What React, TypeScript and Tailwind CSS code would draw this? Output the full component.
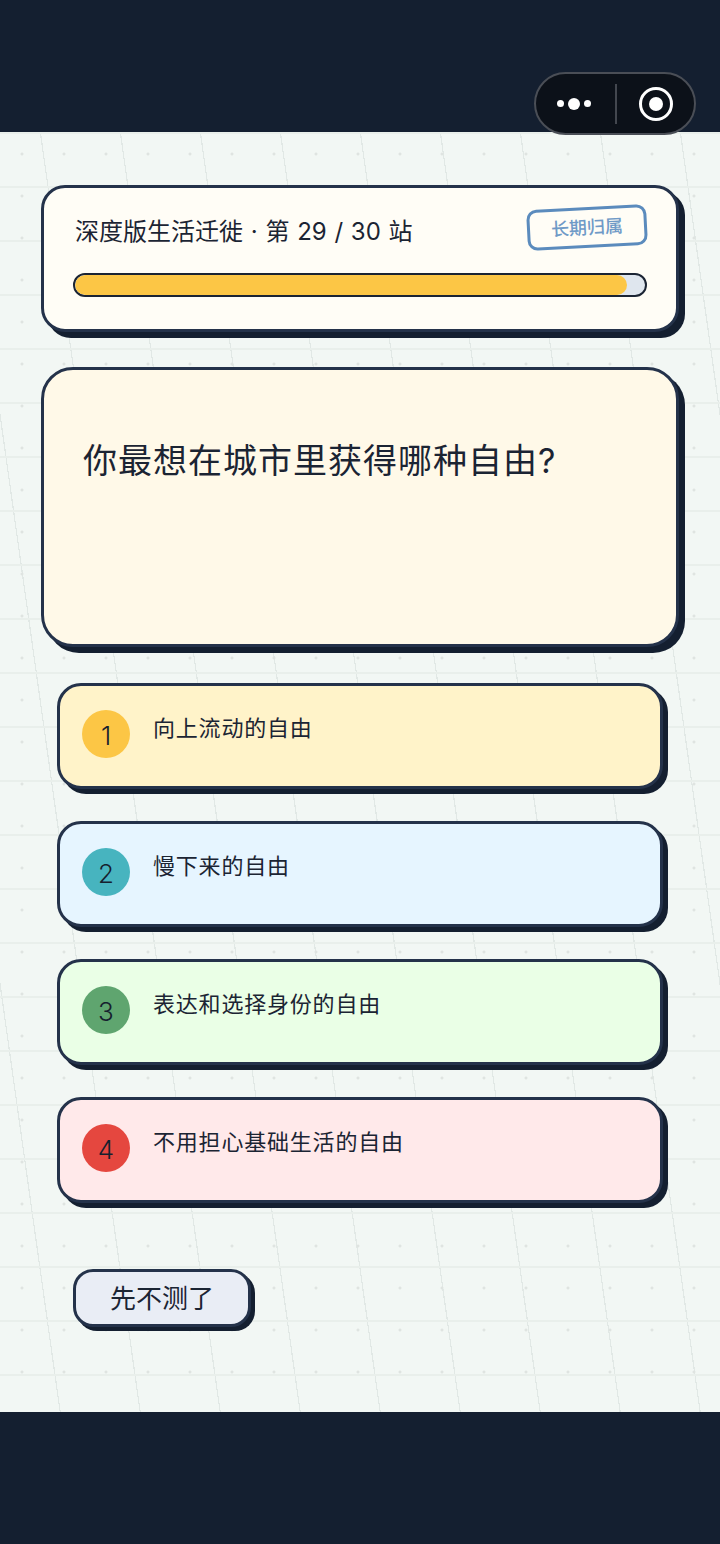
const font = { fontFamily: 'Inter, "Noto Sans CJK SC", "Noto Sans", sans-serif' };

const options = [
  { n: 1, text: "向上流动的自由", bg: "bg-[#fff3c9]", dot: "bg-[#fcc645]" },
  { n: 2, text: "慢下来的自由", bg: "bg-[#e6f5ff]", dot: "bg-[#47b4bf]" },
  { n: 3, text: "表达和选择身份的自由", bg: "bg-[#eaffe6]", dot: "bg-[#5fa56f]" },
  { n: 4, text: "不用担心基础生活的自由", bg: "bg-[#ffe9ea]", dot: "bg-[#e5473f]" },
];

function Capsule() {
  return (
    <div className="absolute left-[534px] top-[72px] flex h-[63px] w-[162px] items-center rounded-full border-2 border-[#4a4e56] bg-[#0c1119]">
      <div className="mr-[3px] flex w-[76px] items-center justify-center gap-[4px]">
        <span className="h-[7px] w-[7px] rounded-full bg-white" />
        <span className="h-[12px] w-[12px] rounded-full bg-white" />
        <span className="h-[7px] w-[7px] rounded-full bg-white" />
      </div>
      <span className="h-[40px] w-[2px] bg-[#43474f]" />
      <div className="flex flex-1 items-center justify-center">
        <svg width="36" height="36" viewBox="0 0 36 36">
          <circle cx="18" cy="18" r="15.5" fill="none" stroke="#fff" strokeWidth="3" />
          <circle cx="18" cy="18" r="7" fill="#fff" />
        </svg>
      </div>
    </div>
  );
}

export default function App() {
  return (
    <div className="relative flex h-[1544px] w-[720px] flex-col bg-[#141f30] text-[#1b2433]" style={font}>
      <div className="h-[132px] shrink-0" />
      <Capsule />
      <main className="flex h-[1280px] flex-col bg-[#f2f7f4] bg-[radial-gradient(circle_at_22px_22px,#dfe4e1_1.2px,transparent_1.8px),linear-gradient(#e9efeb_2px,transparent_2px),repeating-linear-gradient(82deg,transparent_0,transparent_59px,#e1e8e5_59px,#e1e8e5_60.2px,transparent_60.2px,transparent_79.22px)] bg-[size:42px_42px,100%_54px,100%_100%]">
        <section className="mx-[41px] mt-[53px] h-[147px] w-[638px] rounded-[24px] border-[3px] border-[#24324a] bg-[#fffdf6] pl-[29px] pr-[29px] pt-[14px] shadow-[6px_6px_0_#141f30]">
          <div className="flex h-[58px] items-start justify-between">
            <div className="ml-[2px] mt-[12px] text-[24px] leading-[36px] font-normal whitespace-pre text-[#1b2433] [word-spacing:1px]">深度版生活迁徙 · 第 29 / 30 站</div>
            <div className="mt-[5px] flex h-[41px] w-[120px] -rotate-3 items-center justify-center rounded-[10px] border-[3px] border-[#5b8bbd] text-[18px] font-medium text-[#6f9ac7]">长期归属</div>
          </div>
          <div className="mt-[13px] h-[24px] w-[574px] overflow-hidden rounded-full border-2 border-[#1b2433] bg-[#dfe6ee]">
            <div className="h-full w-[552px] rounded-full bg-[#fcc645]" />
          </div>
        </section>

        <section className="mx-[41px] mt-[35px] h-[280px] w-[638px] rounded-[32px] border-[3px] border-[#24324a] bg-[#fff9e8] px-[39px] pt-[61px] shadow-[6px_6px_0_#141f30]">
          <h1 className="text-[34px] leading-[60px] font-normal tracking-[1px] text-[#1b2433]">你最想在城市里获得哪种自由?</h1>
        </section>

        <div className="mx-[57px] mt-[36px] flex w-[606px] flex-col gap-[32px]">
          {options.map((o) => (
            <div key={o.n} className={`flex h-[106px] items-start rounded-[24px] border-[3px] border-[#24324a] px-[22px] pt-[24px] shadow-[5px_5px_0_#141f30] ${o.bg}`}>
              <span className={`flex h-[48px] w-[48px] shrink-0 items-center justify-center rounded-full pt-[4px] text-[26px] leading-none font-light text-[#16202e] ${o.dot}`}>{o.n}</span>
              <span className="ml-[23px] text-[22px] leading-[36px] tracking-[0.8px] text-[#1b2433]">{o.text}</span>
            </div>
          ))}
        </div>

        <button className="mx-[73px] mt-[66px] flex h-[58px] w-[178px] items-center justify-center rounded-[20px] border-[3px] border-[#24324a] bg-[#e9edf5] text-[26px] text-[#1b2433] shadow-[4px_4px_0_#141f30]">先不测了</button>
      </main>
    </div>
  );
}
